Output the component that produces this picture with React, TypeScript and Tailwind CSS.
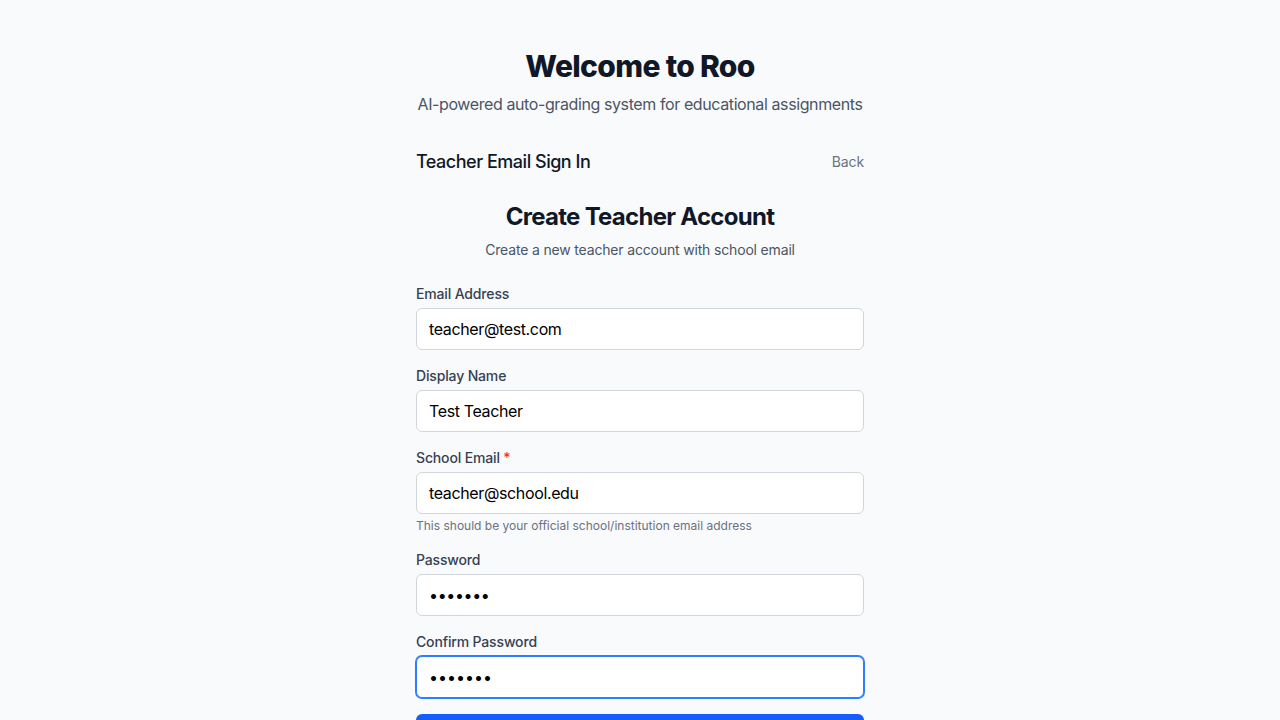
import React from 'react';

const fields = [
  { label: 'Email Address', value: 'teacher@test.com', type: 'email' },
  { label: 'Display Name', value: 'Test Teacher', type: 'text' },
];

const inputCls =
  'block h-[42px] w-full rounded-md border border-gray-300 bg-white px-3 text-base tracking-[-0.023em] text-black outline-none';

export default function App() {
  return (
    <div className="min-h-screen w-full bg-gray-50 font-['Inter',sans-serif]">
      <div className="mx-auto w-full max-w-md pt-12">
        {/* Header */}
        <div className="text-center">
          <h1 className="text-3xl font-extrabold tracking-[-0.022em] text-gray-900">Welcome to Roo</h1>
          <p className="mt-2 whitespace-nowrap text-base tracking-[-0.025em] text-gray-600">
            AI-powered auto-grading system for educational assignments
          </p>
        </div>

        {/* Sign-in bar */}
        <div className="mt-8 flex items-center justify-between">
          <h2 className="text-lg font-medium tracking-[-0.027em] text-gray-900">Teacher Email Sign In</h2>
          <button className="text-sm tracking-[-0.01em] text-gray-500">Back</button>
        </div>

        {/* Form */}
        <div className="mt-[25px]">
          <div className="mb-6 text-center">
            <h3 className="text-2xl font-bold tracking-[-0.03em] text-gray-900">Create Teacher Account</h3>
            <p className="mt-[7px] text-sm tracking-[-0.012em] text-gray-600">Create a new teacher account with school email</p>
          </div>

          <form className="flex flex-col gap-4">
            {fields.map((f) => (
              <div key={f.label}>
                <label className="mb-1 block text-sm font-medium tracking-[-0.011em] text-gray-700">{f.label}</label>
                <input type={f.type} defaultValue={f.value} className={inputCls} />
              </div>
            ))}

            <div>
              <label className="mb-1 block text-sm font-medium tracking-[-0.011em] text-gray-700">
                School Email <span className="text-red-500">*</span>
              </label>
              <input type="email" defaultValue="teacher@school.edu" className={inputCls} />
              <p className="mt-1 text-xs text-gray-500">This should be your official school/institution email address</p>
            </div>

            <div>
              <label className="mb-1 block text-sm font-medium tracking-[-0.011em] text-gray-700">Password</label>
              <input type="password" defaultValue="1234567" className={inputCls} />
            </div>

            <div>
              <label className="mb-1 block text-sm font-medium tracking-[-0.011em] text-gray-700">Confirm Password</label>
              <input
                type="password"
                defaultValue="1234567"
                className="block h-[42px] w-full rounded-md border border-blue-500 bg-white px-3 text-base text-black outline-none ring-1 ring-blue-500"
              />
            </div>

            <button type="button" className="h-[42px] w-full rounded-md bg-blue-600 text-sm font-medium text-white">
              Create Account
            </button>
          </form>
        </div>
      </div>
    </div>
  );
}
